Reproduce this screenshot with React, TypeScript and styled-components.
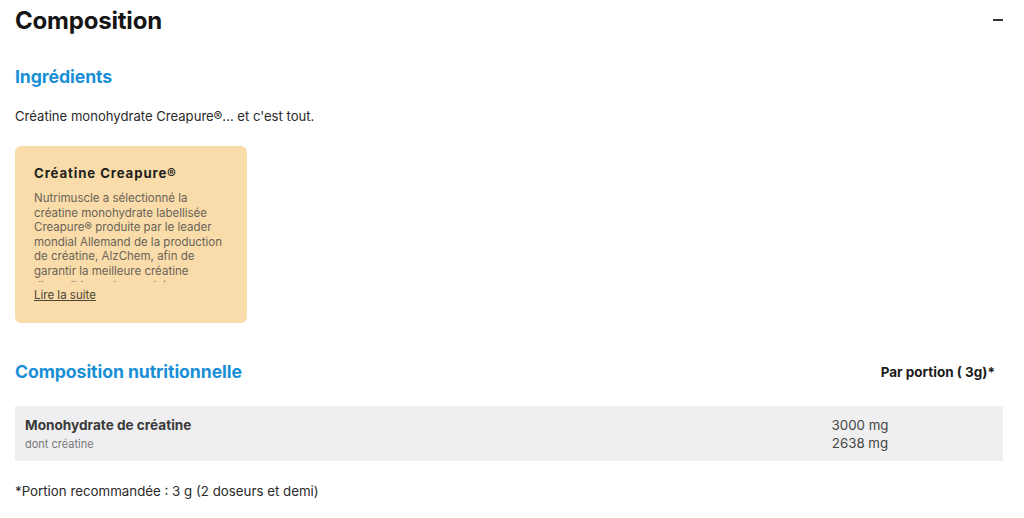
import React from "react";
import styled, { createGlobalStyle } from "styled-components";

const Global = createGlobalStyle`
  html, body { margin: 0; padding: 0; background: #fff; }
  body { font-family: "Inter", "Liberation Sans", sans-serif; color: #1c1c1c; }
  * { box-sizing: border-box; }
`;

const Page = styled.div`
  padding: 5px 21px 0 15px;
  display: flex;
  flex-direction: column;
`;

const Header = styled.div`
  display: flex;
  align-items: center;
  justify-content: space-between;
  height: 30px;
`;

const Title = styled.h1`
  margin: 0;
  font-size: 24px;
  font-weight: 700;
  letter-spacing: -0.2px;
  color: #151515;
`;

const Minus = styled.span`
  display: block;
  width: 10px;
  height: 2px;
  background: #333;
`;

const SectionTitle = styled.h2`
  margin: 0;
  font-size: 17.7px;
  font-weight: 700;
  color: #1a8fd6;
  letter-spacing: -0.1px;
`;

const IngredientsTitle = styled(SectionTitle)`
  margin-top: 31px;
`;

const Paragraph = styled.p`
  margin: 21px 0 0;
  font-size: 13.1px;
  color: #2a2a2a;
`;

const Card = styled.div`
  margin-top: 22px;
  width: 232px;
  height: 177px;
  background: #f9dca9;
  border-radius: 6px;
  padding: 19px 19px;
  display: flex;
  flex-direction: column;
`;

const CardTitle = styled.div`
  font-size: 13.2px;
  font-weight: 700;
  letter-spacing: 0.9px;
  color: #1e1e1e;
`;

const CardBody = styled.div`
  margin-top: 10px;
  font-size: 11.5px;
  line-height: 14.6px;
  color: #6a6358;
  height: 91px;
  overflow: hidden;
`;

const ReadMore = styled.a`
  margin-top: 6px;
  font-size: 11.5px;
  color: #4a443a;
  text-decoration: underline;
  cursor: pointer;
`;

const NutriHeader = styled.div`
  margin-top: 38px;
  display: flex;
  align-items: center;
  justify-content: space-between;
`;

const PortionLabel = styled.div`
  font-size: 13.5px;
  font-weight: 700;
  color: #1c1c1c;
  margin-right: 8px;
`;

const Row = styled.div`
  margin-top: 24px;
  background: #efeff1;
  display: grid;
  grid-template-columns: 1fr 266px;
  padding: 10px 10px 9px;
  height: 55px;
`;

const NameCell = styled.div`
  display: flex;
  flex-direction: column;
`;

const Name = styled.div`
  font-size: 13.6px;
  font-weight: 700;
  color: #3a3a3a;
  line-height: 18px;
`;

const Sub = styled.div`
  margin-top: 2px;
  font-size: 11px;
  color: #777;
  line-height: 16px;
`;

const ValueCell = styled.div`
  display: flex;
  flex-direction: column;
  align-items: center;
  font-size: 13.3px;
  color: #444;
  line-height: 18px;
`;

const Footnote = styled.p`
  margin: 22px 0 0;
  font-size: 13.3px;
  color: #2a2a2a;
`;

export default function App() {
  return (
    <>
      <Global />
      <Page>
        <Header>
          <Title>Composition</Title>
          <Minus />
        </Header>
        <IngredientsTitle>Ingrédients</IngredientsTitle>
        <Paragraph>Créatine monohydrate Creapure®... et c'est tout.</Paragraph>
        <Card>
          <CardTitle>Créatine Creapure®</CardTitle>
          <CardBody>
            Nutrimuscle a sélectionné la créatine monohydrate labellisée
            Creapure® produite par le leader mondial Allemand de la production
            de créatine, AlzChem, afin de garantir la meilleure créatine
            disponible sur le marché.
          </CardBody>
          <ReadMore>Lire la suite</ReadMore>
        </Card>
        <NutriHeader>
          <SectionTitle>Composition nutritionnelle</SectionTitle>
          <PortionLabel>Par portion ( 3g)*</PortionLabel>
        </NutriHeader>
        <Row>
          <NameCell>
            <Name>Monohydrate de créatine</Name>
            <Sub>dont créatine</Sub>
          </NameCell>
          <ValueCell>
            <span>3000 mg</span>
            <span>2638 mg</span>
          </ValueCell>
        </Row>
        <Footnote>*Portion recommandée : 3 g (2 doseurs et demi)</Footnote>
      </Page>
    </>
  );
}
